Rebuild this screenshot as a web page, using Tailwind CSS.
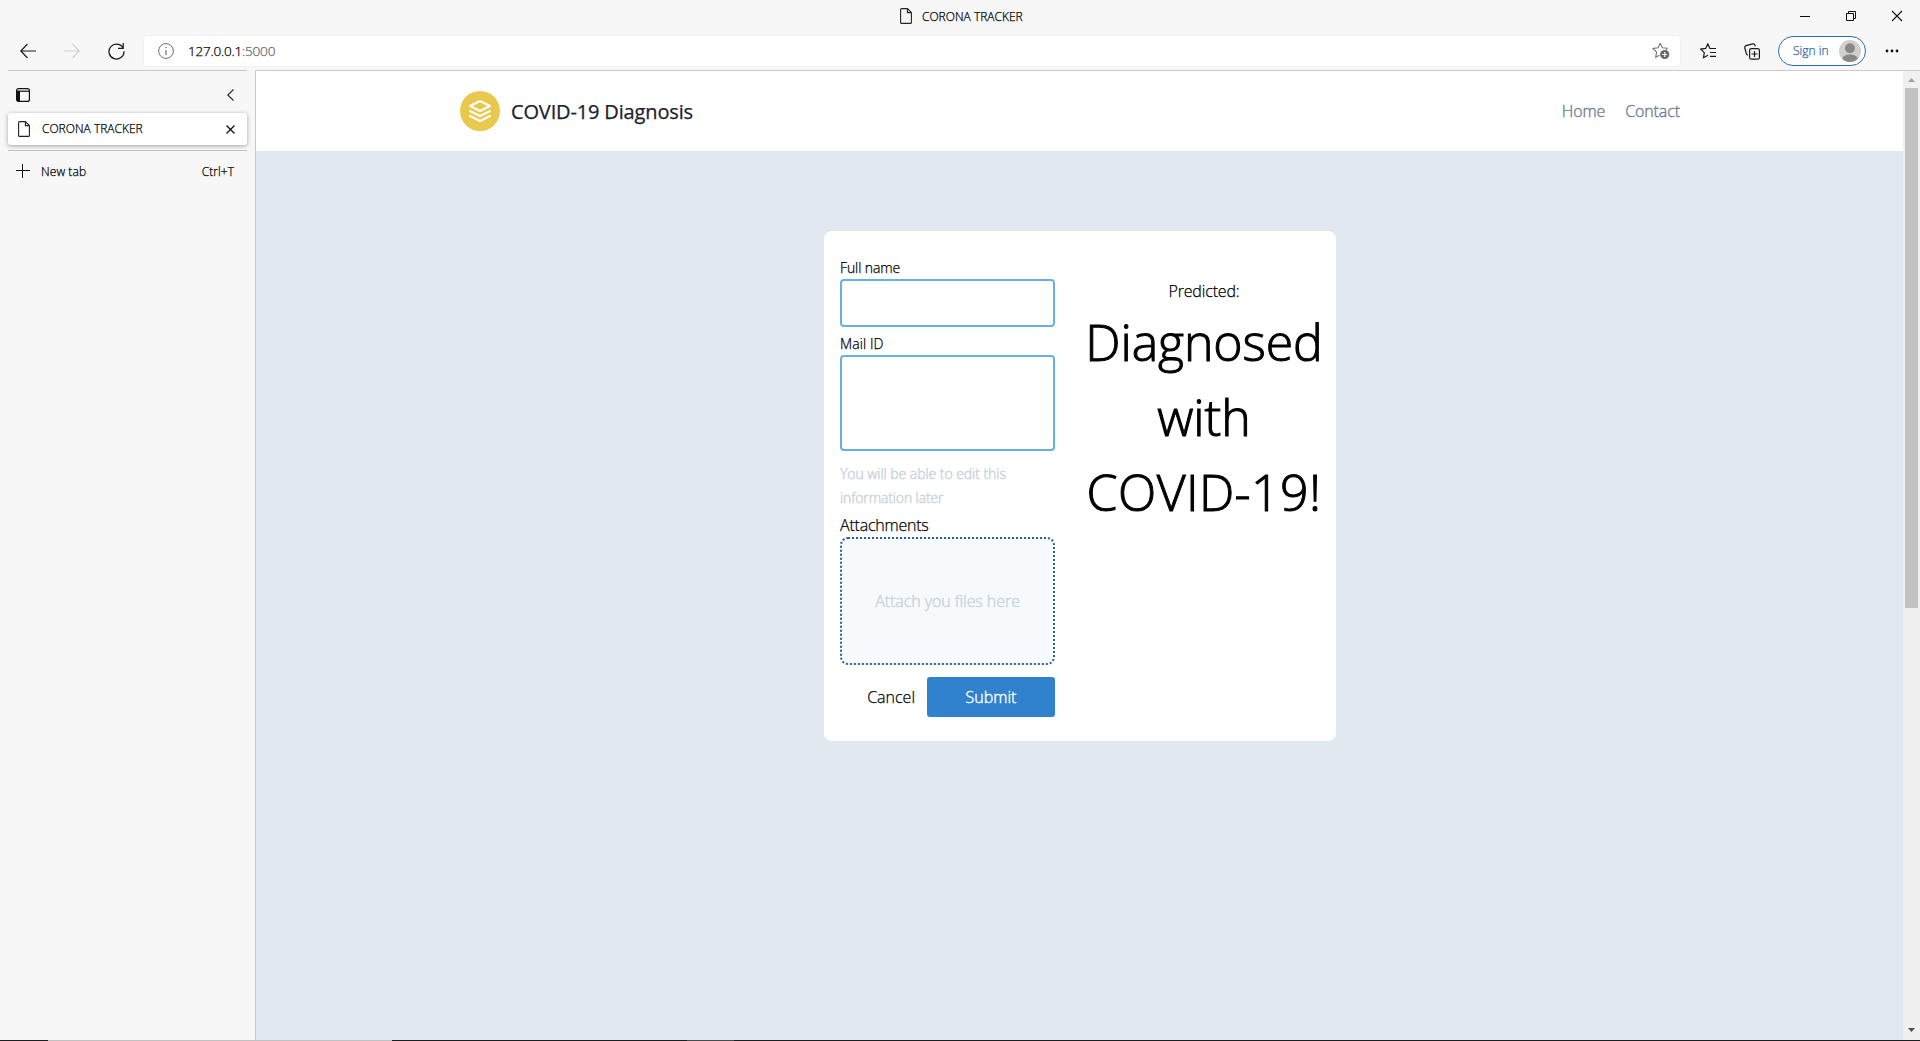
<!DOCTYPE html>
<html lang="en">
<head>
<meta charset="utf-8">
<title>CORONA TRACKER</title>
<script src="https://cdn.jsdelivr.net/npm/@tailwindcss/browser@4"></script>
</head>
<body class="h-[1041px] w-[1920px] overflow-hidden bg-[#f7f7f7] font-['Open_Sans',sans-serif] font-light text-black [-webkit-text-stroke:0.25px]">
<div class="flex h-full flex-col">

  <!-- Title bar -->
  <header class="flex h-8 shrink-0 items-center">
    <div class="w-[900px]"></div>
    <svg class="h-4 w-3 shrink-0" viewBox="0 0 12 16" fill="none" stroke="#222" stroke-width="1.1"><path d="M1.6.6H7.4L11.4 4.6V14.4A1 1 0 0 1 10.4 15.4H1.6A1 1 0 0 1 .6 14.4V1.6A1 1 0 0 1 1.6.6ZM7.4.8V4.6H11.2"/></svg>
    <span class="ml-[10px] pt-px text-xs">CORONA TRACKER</span>
    <div class="ml-auto flex h-7 items-center">
      <svg class="mr-9 h-2.5 w-2.5" viewBox="0 0 10 10" stroke="#111"><path d="M0 5.5H10"/></svg>
      <svg class="mr-9 h-2.5 w-2.5 overflow-visible" viewBox="0 0 10 10" fill="none" stroke="#111"><path d="M.5 2.5H7.5V9.5H.5ZM2.5 2.5V.5H9.5V7.5H7.5"/></svg>
      <svg class="mr-[18px] h-2.5 w-2.5 overflow-visible" viewBox="0 0 10 10" stroke="#111" stroke-width="1.1"><path d="M0 0L10 10M10 0L0 10"/></svg>
    </div>
  </header>

  <!-- Toolbar -->
  <div class="flex h-[38px] shrink-0 items-center">
    <svg class="ml-5 h-4 w-4" viewBox="0 0 16 16" fill="none" stroke="#1a1a1a" stroke-width="1.2"><path d="M7.5 1L.8 8L7.5 15M.8 8H16"/></svg>
    <svg class="ml-7 h-4 w-4" viewBox="0 0 16 16" fill="none" stroke="#d0d0d0" stroke-width="1.2"><path d="M8.5 1L15.2 8L8.5 15M15.2 8H0"/></svg>
    <svg class="ml-7 h-[18px] w-[17px]" viewBox="0 0 17 18" fill="none" stroke="#1a1a1a" stroke-width="1.25"><path d="M15.2 6.2A7.5 7.5 0 1 0 16 9.2M15.2 1V6.3H10"/></svg>
    <div class="ml-[19px] flex h-[30px] w-[1536px] items-center rounded-[3px] bg-white shadow-[0_0_2px_rgba(0,0,0,0.08)]">
      <svg class="ml-3.5 h-4 w-4" viewBox="0 0 16 16" fill="none" stroke="#6f6f6f"><circle cx="8" cy="8" r="7.4"/><path d="M8 7V12" stroke-width="1.2"/><circle cx="8" cy="4.6" r=".3"/></svg>
      <span class="ml-[14px] text-[13.5px] tracking-[-0.2px]">127.0.0.1<span class="text-[#666]">:5000</span></span>
      <svg class="mr-[10px] ml-auto h-[18px] w-[18px]" viewBox="0 0 18 18" fill="none" stroke="#777" stroke-width="1.1"><path d="M8.2 1.2L10.4 5.7L15.6 6.3M8.2 1.2L6 5.7L1 6.5L4.6 10.2L3.7 15.3L7.5 13.2M15.6 6.3L14 7.8"/><circle cx="12.7" cy="12.5" r="4.6" fill="#666" stroke="none"/><path d="M12.7 10V15M10.2 12.5H15.2" stroke="#fff"/></svg>
    </div>
    <svg class="ml-5 h-4 w-4" viewBox="0 0 16 16" fill="none" stroke="#1a1a1a" stroke-width="1.2"><path d="M14.5 5.5H9.9L7.8 .9L5.7 5.4L.8 6.1L4.3 9.7L3.5 14.7L8 12.2M10 9.5H16M10 13.3H16M10.5 5.5H16"/></svg>
    <svg class="ml-7 h-[17px] w-4" viewBox="0 0 16 17" fill="none" stroke="#1a1a1a" stroke-width="1.2"><rect x="5.6" y="5.6" width="9.8" height="10.6" rx="1.8"/><path d="M10.5 8V14M7.5 11H13.5M3.8 12.2C2.8 11.8 2.6 11.3 2.3 10.5L.8 5C.5 3.6 1 3 2 2.6L8.8.9C10 .6 10.7 1.2 11 2.2L11.3 3.4"/></svg>
    <div class="ml-[18px] flex h-[30px] w-[88px] items-center rounded-full border border-[#2a6db5] bg-white text-xs text-[#2665aa]">
      <span class="ml-3.5">Sign in</span>
      <svg class="mr-1 ml-auto h-[22px] w-[22px]" viewBox="0 0 22 22"><circle cx="11" cy="11" r="11" fill="#d2d0ce"/><circle cx="11" cy="8.2" r="5" fill="#8a8886"/><path d="M3.2 18.7C4.8 13.2 17.2 13.2 18.8 18.7A11 11 0 0 1 3.2 18.7Z" fill="#8a8886"/></svg>
    </div>
    <svg class="ml-[19px] h-1 w-[14px]" viewBox="0 0 14 4" fill="#111"><circle cx="2" cy="2" r="1.4"/><circle cx="7" cy="2" r="1.4"/><circle cx="12" cy="2" r="1.4"/></svg>
  </div>

  <div class="flex h-[970px] shrink-0">
    <!-- Vertical tabs -->
    <aside class="w-[255px] shrink-0 px-2 text-xs">
      <div class="flex h-[43px] w-[239px] items-center justify-between border-t border-[#c8c8c8] pt-1.5 pr-3 pl-2">
        <svg class="h-3.5 w-3.5" viewBox="0 0 14 14" fill="none" stroke="#111" stroke-width="1.2"><rect x=".6" y=".6" width="12.8" height="12.8" rx="2"/><path d="M1 3.2H13"/><path d="M.6 3H4V13.4H2A1.4 1.4 0 0 1 .6 12Z" fill="#111" stroke="none"/></svg>
        <svg class="h-3 w-[9px]" viewBox="0 0 9 12" fill="none" stroke="#222" stroke-width="1.1"><path d="M7.5 .5L1.8 6L7.5 11.5"/></svg>
      </div>
      <div class="flex h-8 w-[239px] items-center rounded-[3px] bg-white shadow-[0_1px_4px_rgba(0,0,0,0.35)]">
        <svg class="ml-[10px] h-4 w-3" viewBox="0 0 12 16" fill="none" stroke="#222" stroke-width="1.1"><path d="M1.6.6H7.4L11.4 4.6V14.4A1 1 0 0 1 10.4 15.4H1.6A1 1 0 0 1 .6 14.4V1.6A1 1 0 0 1 1.6.6ZM7.4.8V4.6H11.2"/></svg>
        <span class="ml-3">CORONA TRACKER</span>
        <svg class="mr-3 ml-auto h-[9px] w-[9px]" viewBox="0 0 9 9" stroke="#111" stroke-width="1.3"><path d="M.5.5L8.5 8.5M8.5.5L.5 8.5"/></svg>
      </div>
      <div class="mt-[5px] flex h-[41px] w-[239px] items-center border-t border-[#c0c0c0] pl-2">
        <svg class="h-3.5 w-3.5" viewBox="0 0 14 14" stroke="#111"><path d="M0 6.5H14M6.5 0V14"/></svg>
        <span class="ml-[11px] pt-0.5 tracking-[0.08px]">New tab</span>
        <span class="mr-[13px] ml-auto pt-0.5 tracking-[0.05px]">Ctrl+T</span>
      </div>
    </aside>

    <!-- Page -->
    <main class="w-[1648px] shrink-0 border-t border-l border-[#cacaca] bg-[#e2e8f0]">
      <nav class="flex h-20 items-center bg-white pr-[223px] pl-[204px]">
        <svg class="h-10 w-10" viewBox="0 0 40 40" fill="none" stroke="#fff" stroke-width="2" stroke-linejoin="round" stroke-linecap="round"><circle cx="20" cy="20" r="20" fill="#e9c84e" stroke="none"/><path d="M20 10L30 15L20 20L10 15ZM10 20L20 25L30 20M10 25L20 30L30 25"/></svg>
        <span class="ml-[11px] pt-0.5 text-xl font-normal tracking-[-0.15px] text-[#1a202c]">COVID-19 Diagnosis</span>
        <div class="ml-auto flex gap-5 tracking-[-0.1px] text-[#718096] [-webkit-text-stroke:0.4px]"><span>Home</span><span>Contact</span></div>
      </nav>

      <section class="mt-20 ml-[568px] flex h-[510px] w-[512px] rounded-lg bg-white px-4">
        <form class="flex w-[215px] flex-col pt-[27px]">
          <label class="text-sm tracking-[-0.1px]" for="name">Full name</label>
          <input id="name" class="mt-px h-12 shrink-0 rounded border-2 border-[#69b0e2]">
          <label class="mt-[7px] text-sm tracking-[0.1px]" for="mail">Mail ID</label>
          <textarea id="mail" class="mt-px h-24 shrink-0 resize-none rounded border-2 border-[#69b0e2]"></textarea>
          <p class="mt-[11px] text-sm/6 tracking-[-0.05px] text-[#cbd5e0] [-webkit-text-stroke:0.5px]">You will be able to edit this<br><span class="tracking-[-0.12px]">information later</span></p>
          <label class="mt-[3px] tracking-[-0.22px]">Attachments</label>
          <div class="flex h-32 shrink-0 items-center justify-center rounded-lg border-2 border-dotted border-[#2c5f92] bg-[#f7fafc] tracking-[-0.06px] text-[#cbd5e0] [-webkit-text-stroke:0.5px]">Attach you files here</div>
          <div class="mt-3 flex h-10 shrink-0 items-center justify-end gap-3">
            <span>Cancel</span>
            <button type="button" class="h-10 w-32 rounded-[3px] bg-[#3182ce] text-white [-webkit-text-stroke:0.4px]">Submit</button>
          </div>
        </form>
        <div class="-mr-2.5 ml-6 w-[250px] shrink-0 pt-[48px] text-center">
          <p class="tracking-[-0.15px]">Predicted:</p>
          <p class="mt-0.5 text-[50px]/[75px] whitespace-nowrap [-webkit-text-stroke:1px]"><span class="tracking-[-0.1px]">Diagnosed</span><br>with<br><span class="tracking-[0.4px]">COVID-19!</span></p>
        </div>
      </section>
    </main>

    <!-- Scrollbar -->
    <div class="flex w-[17px] shrink-0 flex-col items-center border-t border-[#cacaca] bg-[#f0f0f0]">
      <svg class="mt-[7px] h-1 w-[7px]" viewBox="0 0 7 4" fill="#a0a0a0"><path d="M0 4L3.5 0L7 4Z"/></svg>
      <div class="mt-[6px] h-[520px] w-[13px] bg-[#c1c1c1]"></div>
      <svg class="mt-auto mb-[8px] h-1 w-[7px]" viewBox="0 0 7 4" fill="#505050"><path d="M0 0L3.5 4L7 0Z"/></svg>
    </div>
  </div>

  <!-- Edge of the taskbar -->
  <div class="flex h-px shrink-0 bg-[#1d1d20]">
    <div class="ml-12 w-[344px] bg-[#c0c0c0]"></div>
    <div class="ml-[295px] w-[47px] bg-[#4a4a4c]"></div>
  </div>
</div>
</body>
</html>
